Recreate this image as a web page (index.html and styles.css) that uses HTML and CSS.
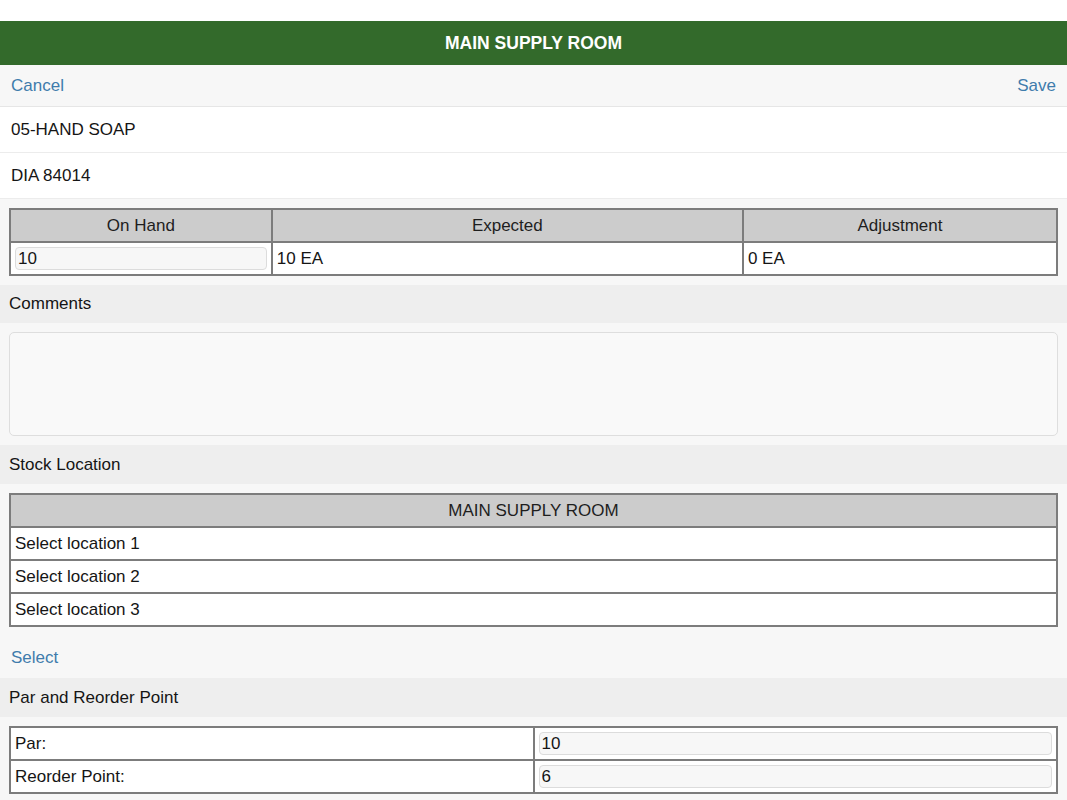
FILE: index.html
```
<!DOCTYPE html>
<html>
<head>
<meta charset="utf-8">
<link rel="stylesheet" href="styles.css">
</head>
<body>
<div class="status-space"></div>
<header class="titlebar">MAIN SUPPLY ROOM</header>
<nav class="toolbar">
  <a class="link">Cancel</a>
  <a class="link">Save</a>
</nav>
<div class="item-row">05-HAND SOAP</div>
<div class="item-row">DIA 84014</div>

<div class="block">
  <table class="grid">
    <colgroup><col class="c25"><col class="c45"><col class="c30"></colgroup>
    <tr><th>On Hand</th><th>Expected</th><th>Adjustment</th></tr>
    <tr><td class="incell"><input class="field" value="10"></td><td>10 EA</td><td>0 EA</td></tr>
  </table>
</div>

<div class="section-head section-head-short">Comments</div>
<div class="block">
  <textarea class="comments"></textarea>
</div>

<div class="section-head">Stock Location</div>
<div class="block block-tight">
  <table class="grid">
    <tr><th>MAIN SUPPLY ROOM</th></tr>
    <tr><td>Select location 1</td></tr>
    <tr><td>Select location 2</td></tr>
    <tr><td>Select location 3</td></tr>
  </table>
</div>
<div class="select-row"><a class="link">Select</a></div>

<div class="section-head">Par and Reorder Point</div>
<div class="block">
  <table class="grid">
    <colgroup><col class="c50"><col class="c50"></colgroup>
    <tr><td>Par:</td><td class="incell"><input class="field" value="10"></td></tr>
    <tr><td>Reorder Point:</td><td class="incell"><input class="field" value="6"></td></tr>
  </table>
</div>
</body>
</html>
```
FILE: styles.css
```
* { box-sizing: border-box; }
html, body {
  margin: 0;
  padding: 0;
  background: #f7f7f7;
  font-family: "Liberation Sans", Arial, sans-serif;
  font-size: 17px;
  color: #151515;
}
.status-space {
  height: 21px;
  background: #ffffff;
}
.titlebar {
  height: 44px;
  background: #336a2b;
  color: #ffffff;
  font-weight: bold;
  font-size: 17.5px;
  display: flex;
  align-items: center;
  justify-content: center;
}
.toolbar {
  height: 42px;
  display: flex;
  align-items: center;
  justify-content: space-between;
  padding: 0 11px;
  background: #f7f7f7;
  border-bottom: 1px solid #e6e6e6;
}
.link {
  color: #3f7cac;
  font-size: 17px;
}
.item-row {
  height: 46px;
  display: flex;
  align-items: center;
  padding: 0 11px;
  background: #ffffff;
  border-bottom: 1px solid #ececec;
}
.block {
  padding: 9px;
  background: #f7f7f7;
}
.block-tight {
  padding-bottom: 0;
}
.grid {
  width: 100%;
  border-collapse: collapse;
  table-layout: fixed;
  border: 2px solid #7c7c7c;
}
.c25 { width: 25%; }
.c45 { width: 45%; }
.c30 { width: 30%; }
.c50 { width: 50%; }
.grid th, .grid td {
  border: 2px solid #7c7c7c;
  height: 33px;
  padding: 0 4px;
  font-size: 17px;
  white-space: nowrap;
}
.grid th {
  background: #cccccc;
  font-weight: normal;
  color: #1e1e1e;
  text-align: center;
}
.grid td {
  background: #ffffff;
  text-align: left;
}
.grid td.incell {
  padding: 0 4px;
}
.field {
  display: block;
  width: 100%;
  height: 23px;
  margin: 0;
  padding: 0 2px;
  font-family: "Liberation Sans", Arial, sans-serif;
  font-size: 17px;
  color: #151515;
  background: #f7f7f7;
  border: 1px solid #dcdcdc;
  border-radius: 4px;
  outline: none;
}
.section-head {
  height: 39px;
  display: flex;
  align-items: center;
  padding: 0 9px;
  background: #eeeeee;
}
.section-head-short {
  height: 38px;
}
.comments {
  display: block;
  width: 100%;
  height: 104px;
  resize: none;
  background: #f9f9f9;
  border: 1px solid #dedede;
  border-radius: 5px;
}
.select-row {
  height: 51px;
  display: flex;
  align-items: flex-end;
  padding: 0 11px 10px 11px;
}
```
